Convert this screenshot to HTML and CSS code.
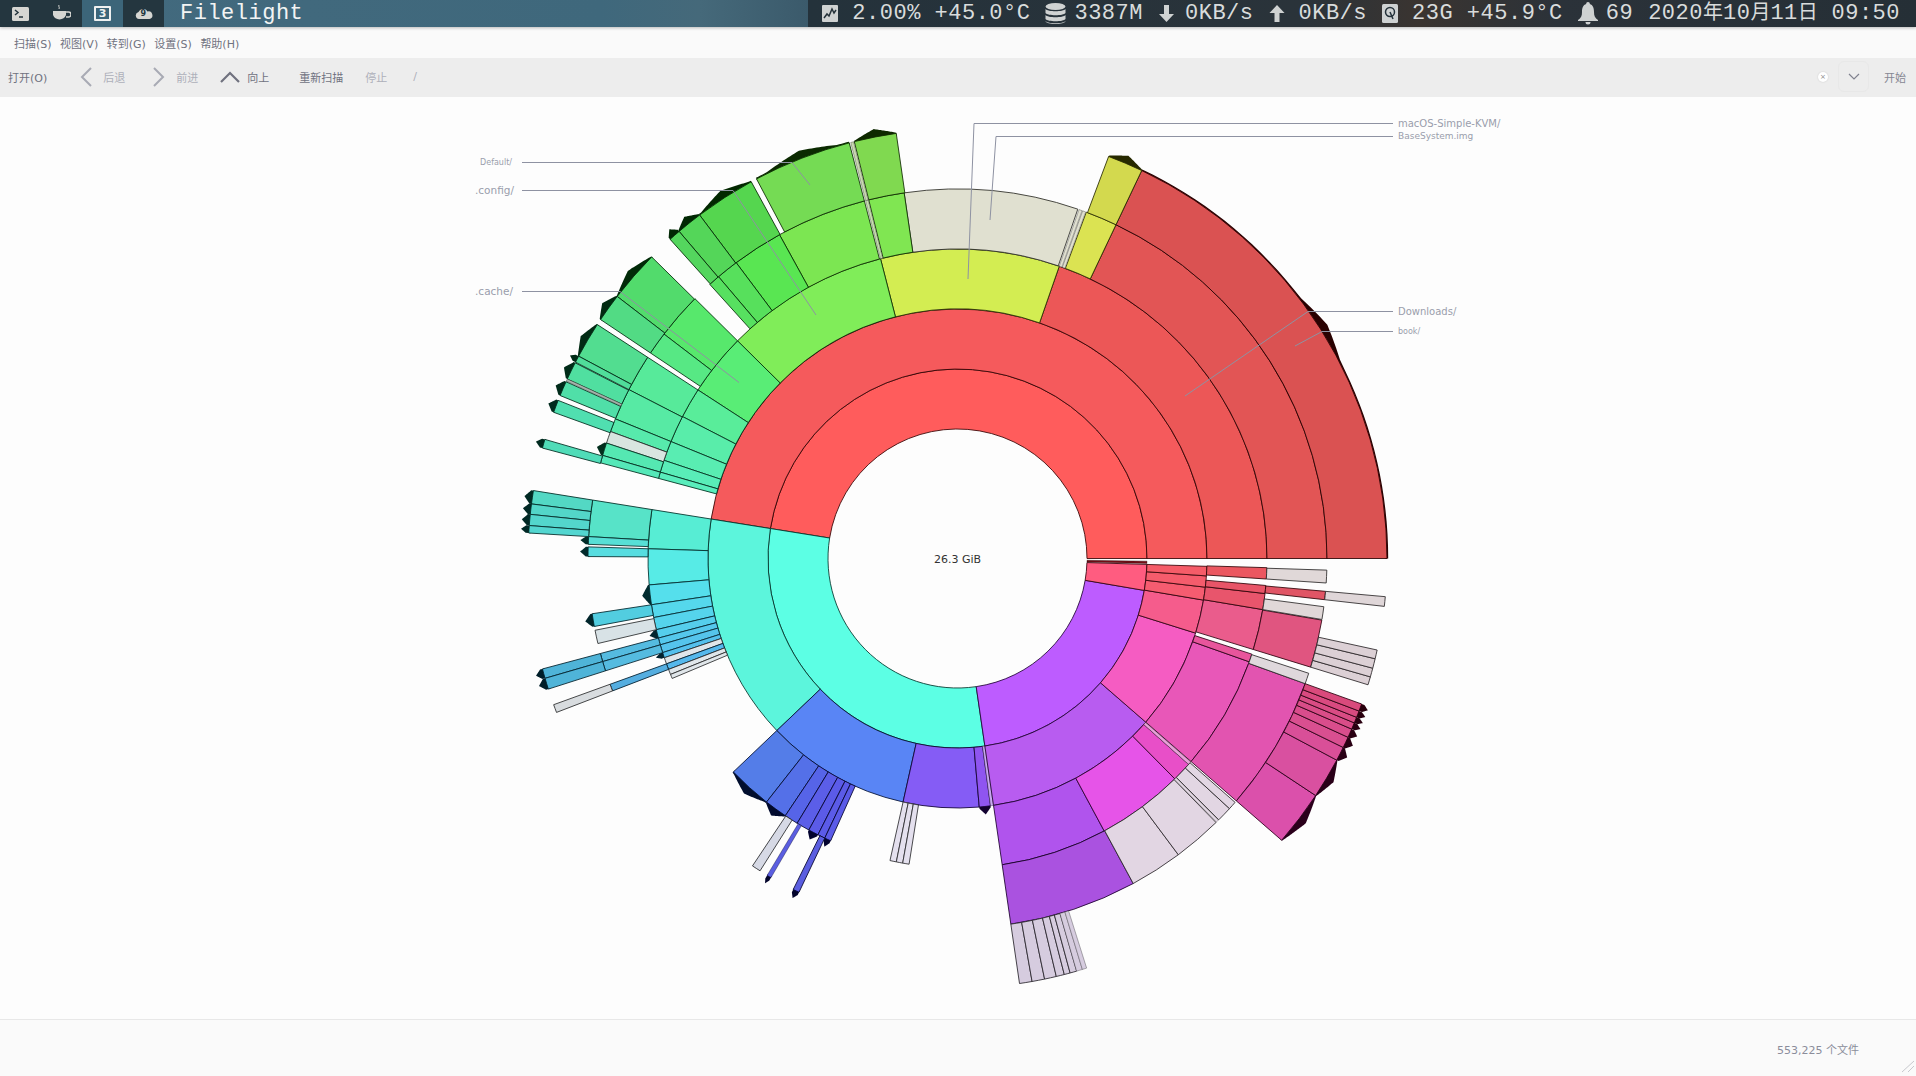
FILE: index.html
```html
<!DOCTYPE html>
<html>

<head>
    <meta name="viewport" content="width=device-width, minimum-scale=1">

    <title>Filelight</title>
    <link rel="stylesheet" href="styles.css">
</head>

<body>
    <!-- desktop panel -->
    <header class="panel">
        <div class="tile">
            <svg width="17" height="14" viewBox="0 0 17 14">
                <rect width="17" height="14" rx="1.5" fill="#d6d6d2"/>
                <path d="M3 3l3 2.5-3 2.5M7 10h4" fill="none" stroke="#24343c" stroke-width="1.5"/>
            </svg>
        </div>
        <div class="tile">
            <svg width="19" height="19" viewBox="0 0 19 19">
                <path d="M1 7h13v4a7 7 0 0 1-13 0z" fill="#d6d6d2"/>
                <path d="M14 8h2.500a2 2 0 0 1 0 5H14" fill="none" stroke="#d6d6d2" stroke-width="1.6"/>
                <path d="M7 1c-1 1.500 1 2 0 4" fill="none" stroke="#d6d6d2"/>
            </svg>
        </div>
        <div class="tile tile-active"><span class="workspace">3</span></div>
        <div class="tile">
            <div class="cloud">
                <svg width="18" height="10" viewBox="0 0 18 10">
                    <path d="M4 10a3.500 3.500 0 0 1-.500-6.900A5 5 0 0 1 12.500 2.500 3.800 3.800 0 0 1 14.500 10z" fill="#d6d6d2"/>
                </svg>
                <span class="cloud-num">9</span>
            </div>
        </div>
        <div class="panel-title">Filelight</div>

        <div class="status">
            <div class="status-item">
                <svg width="16" height="17" viewBox="0 0 16 17">
                    <rect width="16" height="17" rx="1" fill="#cfd2d2"/>
                    <path d="M2 13l3-4 2 2 3-7 2 4 2-3" fill="none" stroke="#25323a" stroke-width="1.500"/>
                </svg>
                <span>2.00% +45.0°C</span>
            </div>
            <div class="status-item status-tight">
                <svg width="21" height="22" viewBox="0 0 21 22" fill="#cfd2d2">
                    <ellipse cx="10.500" cy="3.500" rx="10" ry="3.500"/>
                    <path d="M.5 6c2 3 18 3 20 0v4c-2 3-18 3-20 0zM.5 12c2 3 18 3 20 0v4c-2 3-18 3-20 0zM.5 18c2 3 18 3 20 0 0 4-20 4-20 0z"/>
                </svg>
                <span>3387M</span>
            </div>
            <div class="status-item status-mid">
                <svg width="17" height="17" viewBox="0 0 17 17"><path d="M6 0h5v9h5l-7.500 8L1 9h5z" fill="#cfd2d2"/></svg>
                <span>0KB/s</span>
            </div>
            <div class="status-item">
                <svg width="16" height="17" viewBox="0 0 16 17"><path d="M5.500 17h5V8h5L8 0 .5 8h5z" fill="#cfd2d2"/></svg>
                <span>0KB/s</span>
            </div>
            <div class="status-item">
                <svg width="16" height="19" viewBox="0 0 16 19">
                    <rect width="16" height="19" rx="1.500" fill="#cfd2d2"/>
                    <circle cx="8" cy="8" r="4.500" fill="none" stroke="#25323a" stroke-width="1.500"/>
                    <path d="M8 8l3 7" stroke="#25323a" stroke-width="1.500"/>
                </svg>
                <span>23G +45.9°C</span>
            </div>
            <div class="status-item status-tight">
                <svg width="20" height="23" viewBox="0 0 20 23">
                    <path d="M10 0a1.800 1.800 0 0 1 1.800 2C15 3 16 6 16 10c0 4 1 6 4 8v1H0v-1c3-2 4-4 4-8 0-4 1-7 4.200-8A1.800 1.800 0 0 1 10 0zM7.500 20h5a2.500 2.500 0 0 1-5 0z" fill="#cfd2d2"/>
                </svg>
                <span>69</span>
            </div>
            <div class="status-item"><span>2020<span class="cjk">年</span>10<span class="cjk">月</span>11<span class="cjk">日</span> 09:50</span></div>
        </div>
    </header>

    <nav class="menubar">
        <span>扫描(S)</span>
        <span>视图(V)</span>
        <span>转到(G)</span>
        <span>设置(S)</span>
        <span>帮助(H)</span>
    </nav>

    <div class="toolbar">
        <span class="tool">打开(O)</span>
        <span class="tool tool-off tool-gap">
            <svg width="12" height="20" viewBox="0 0 12 20"><path d="M11 1L2 10l9 9" fill="none" stroke="#a8aab4" stroke-width="2"/></svg>
            后退
        </span>
        <span class="tool tool-off tool-next">
            <svg width="12" height="20" viewBox="0 0 12 20"><path d="M1 1l9 9-9 9" fill="none" stroke="#a8aab4" stroke-width="2"/></svg>
            前进
        </span>
        <span class="tool tool-up">
            <svg width="20" height="12" viewBox="0 0 20 12"><path d="M1 11l9-9 9 9" fill="none" stroke="#70727f" stroke-width="2.200"/></svg>
            向上
        </span>
        <span class="tool tool-rescan">重新扫描</span>
        <span class="tool tool-off">停止</span>
        <span class="tool tool-off tool-path">/</span>

        <div class="toolbar-end">
            <span class="clear-dot">×</span>
            <span class="combo-btn">
                <svg width="12" height="7" viewBox="0 0 12 7"><path d="M1 1l5 5 5-5" fill="none" stroke="#80828f" stroke-width="1.200"/></svg>
            </span>
            <span class="tool tool-start">开始</span>
        </div>
    </div>

    <main class="chart-area">
        <svg id="chart" class="chart" viewBox="0 97 1916 922"></svg>
    </main>

    <footer class="statusbar">
        <span>553,225 个文件</span>
        <svg class="grip" width="14" height="14" viewBox="0 0 14 14">
            <path d="M1 13L13 2M7 13l6-6" fill="none" stroke="#c8c9ce"/>
        </svg>
    </footer>

    <script src="chart.js"></script>
</body>

</html>
```
FILE: styles.css
```css
* {
    box-sizing: border-box;
    padding: 0;
    margin: 0;
}

:root {
    --text: #70727f;
    --text-off: #aeb0ba;
}

body {
    display: flex;
    flex-direction: column;
    height: 100vh;
    overflow: hidden;
    background: #fdfdfd;
    color: var(--text);
    font: 11px "DejaVu Sans", "Noto Sans CJK SC", sans-serif;
}

/* panel */
.panel {
    display: flex;
    align-items: stretch;
    height: 27px;
    flex: none;
    color: #d9dcdc;
    font: 22px/26px "Liberation Mono", "Noto Sans CJK SC", monospace;
    letter-spacing: 0.5px;
    background: linear-gradient(90deg, #436a7e 0, #3f687c 600px, #45697a 700px, #3b5a6b 808px, #24323b 808px, #2a333a 1300px, #3a3430 1420px, #2b3239 1560px, #252f36 100%);
    box-shadow: 0 1px 3px rgba(0, 0, 0, 0.25);
    position: relative;
}

.tile {
    display: flex;
    align-items: center;
    justify-content: center;
    width: 41px;
    background: #24363f;
}

.tile-active {
    background: #3c6579;
}

.workspace {
    display: block;
    width: 17px;
    height: 15px;
    border: 2px solid #eef0f0;
    border-radius: 1px;
    color: #eef0f0;
    font: bold 11px/11px "DejaVu Sans", sans-serif;
    text-align: center;
    letter-spacing: 0;
}

.cloud {
    position: relative;
    display: flex;
}

.cloud-num {
    position: absolute;
    left: 6px;
    top: 0;
    color: #24363f;
    font: bold 8px/10px "DejaVu Sans", sans-serif;
    letter-spacing: 0;
}

.panel-title {
    margin-left: 16px;
    padding-top: 1px;
    color: #f2f4f4;
}

.status {
    display: flex;
    align-items: center;
    gap: 15px;
    margin-left: auto;
    padding-right: 16px;
}

.status-item {
    display: flex;
    align-items: center;
    gap: 14px;
}

.status-tight {
    gap: 8px;
}

.status-mid {
    gap: 10px;
}

.cjk {
    font-size: 20px;
    letter-spacing: 0;
}

/* menu and toolbar */
.menubar {
    display: flex;
    align-items: center;
    gap: 8.500px;
    flex: none;
    height: 31px;
    padding-left: 14px;
    background: #fafafa;
}

.toolbar {
    display: flex;
    align-items: center;
    gap: 22px;
    flex: none;
    height: 39px;
    padding: 0 0 2px 8px;
    background: #ededed;
}

.tool {
    display: flex;
    align-items: center;
    gap: 11px;
    white-space: nowrap;
}

.tool-off {
    color: var(--text-off);
}

.tool-gap {
    margin-left: 11px;
}

.tool-next {
    margin-left: 6px;
}

.tool-up {
    gap: 7px;
}

.tool-rescan {
    margin-left: 8px;
}

.tool-path {
    margin-left: 4px;
}

.toolbar-end {
    display: flex;
    align-items: center;
    margin-left: auto;
    padding-right: 10px;
}

.clear-dot {
    width: 10px;
    height: 10px;
    border-radius: 50%;
    background: #fff;
    box-shadow: 0 0 2px rgba(0, 0, 0, 0.15);
    color: #888;
    font-size: 7px;
    line-height: 10px;
    text-align: center;
}

.combo-btn {
    display: flex;
    align-items: center;
    justify-content: center;
    width: 31px;
    height: 31px;
    margin: 0 15px 0 10px;
    border: 1px solid #e8e8e8;
    border-radius: 6px;
}

.tool-start {
    color: #858793;
}

/* chart */
.chart-area {
    flex: 1;
    min-height: 0;
    background: #fdfdfd;
}

.chart {
    display: block;
    width: 100%;
    height: 100%;
}

.seg {
    stroke-width: 1;
    stroke-opacity: 0.85;
    stroke-linejoin: round;
}

.seg-thin {
    stroke-width: 0.6;
    stroke-opacity: 0.6;
}

.leader {
    fill: none;
    stroke: #8e92a2;
    stroke-width: 1;
}

.chart-label {
    fill: #9a9dac;
    font-family: "DejaVu Sans", sans-serif;
}

.chart-total {
    fill: #333;
    font-family: "DejaVu Sans", sans-serif;
    font-size: 11px;
    text-anchor: middle;
}

/* bottom bar */
.statusbar {
    position: relative;
    display: flex;
    align-items: center;
    justify-content: flex-end;
    flex: none;
    height: 57px;
    padding: 2px 57px 0 0;
    border-top: 1px solid #e8e8e8;
    background: #fafafa;
    color: #8b8d9b;
}

.grip {
    position: absolute;
    right: 1px;
    bottom: 3px;
}
```
FILE: chart.js
```js
const CX = 957.5;
const CY = 558.5;
const RADII = [129.5, 189.5, 249.5, 309.5, 369.5, 429.5];

const GREY = "#e2d6e3";

// ring, start angle, end angle, colour, has-more arrow
const segments = [
    // ring 0
    [0, 0, 170.9, "#ff5c5c"],
    [0, 170.9, 278.3, "#5cffe4"],
    [0, 278.3, 350.3, "#bd5cff"],
    [0, 350.3, 358.2, "#ff5c80"],
    [0, 358.5, 359.2, "#7a1018"],

    // ring 1
    [1, 0, 170.9, "#f55a5c"],
    [1, 170.9, 223.6, "#5cf5dc"],
    [1, 223.6, 257.4, "#5985f5"],
    [1, 257.4, 275, "#855cf5"],
    [1, 275, 277.6, "#8f55f0", 1],
    [1, 277.6, 278.3, "#c8a8f0"],
    [1, 278.3, 319, "#b85cf0"],
    [1, 319, 342.6, "#f55cc2"],
    [1, 342.6, 350.4, "#f55c8c"],
    [1, 350.4, 353.4, "#f55c70"],
    [1, 353.4, 356, "#f55c6c"],
    [1, 356, 358.2, "#f55c68"],

    // ring 2 - top half
    [2, 0, 70.8, "#ec5757"],
    [2, 70.8, 104.4, "#d3ed52"],
    [2, 104.4, 135.3, "#80ed59"],
    [2, 135.3, 147, "#59ed76"],
    [2, 147, 152.7, "#59ed9a"],
    [2, 152.7, 157.8, "#59edaa"],
    [2, 157.8, 161.5, "#59edb2"],
    [2, 161.5, 163.8, "#59edb8"],
    [2, 163.8, 165, "#59edbc"],

    // ring 2 - cyan
    [2, 170.9, 178.2, "#57edd4"],
    [2, 178.2, 184.9, "#57ebe6"],
    [2, 184.9, 188.6, "#55dfec", 1],
    [2, 188.6, 191, "#55d8ec"],
    [2, 191, 193.3, "#55d4ec"],
    [2, 193.3, 194.9, "#55ceec", 1],
    [2, 194.9, 196.2, "#55c8ec"],
    [2, 196.2, 197.7, "#55c4ec"],
    [2, 197.7, 198.7, "#55c0ec", 1],
    [2, 198.7, 199.9, "#e0e6ea"],
    [2, 199.9, 201, "#55b8ec"],
    [2, 201, 202, "#e0e6ea"],
    [2, 202, 202.8, "#e0e6ea"],

    // ring 2 - blue
    [2, 223.6, 231.9, "#547de8", 1],
    [2, 231.9, 236.2, "#5470e8", 1],
    [2, 236.2, 238.8, "#5664e8"],
    [2, 238.8, 241.3, "#5b5ee8"],
    [2, 241.3, 243.2, "#5b5be8", 1],
    [2, 243.2, 244.6, "#5b5be8"],
    [2, 244.6, 245.8, "#5b5be8", 1],
    [2, 257.4, 258.6, "#e4e0ee"],
    [2, 258.6, 259.8, "#e4e0ee"],
    [2, 259.8, 261, "#e4e0ee"],

    // ring 2 - purple
    [2, 278.3, 298.3, "#b054ed"],
    [2, 298.3, 314.6, "#e654e8"],
    [2, 314.6, 318.3, "#e84fc8"],
    [2, 318.3, 318.9, "#e8a0d8"],
    [2, 319, 340.5, "#e857b8"],
    [2, 340.5, 342, "#e8559c"],
    [2, 342.9, 350.5, "#ea5c8c"],
    [2, 350.5, 353.5, "#e8556c"],
    [2, 353.5, 355, "#e85568"],
    [2, 356.2, 358.3, "#eb5760"],

    // ring 3 - top half
    [3, 0, 64.6, "#e25555"],
    [3, 64.6, 69.6, "#dbe352"],
    [3, 69.7, 70.2, "#e0e0d0"],
    [3, 70.3, 70.8, "#e0e0d0"],
    [3, 71, 98.3, "#e0e0d0"],
    [3, 98.3, 103.9, "#80e652"],
    [3, 104, 104.4, "#c8e0b0"],
    [3, 104.6, 118.8, "#7ce652"],
    [3, 118.8, 126.8, "#59e652"],
    [3, 126.8, 130.3, "#57e05c"],
    [3, 130.3, 132.1, "#57e060"],
    [3, 135.3, 142.6, "#57e86c"],
    [3, 142.6, 146.2, "#57e884"],
    [3, 147, 152.8, "#57ea9a"],
    [3, 152.8, 157.8, "#57eaa4"],
    [3, 157.8, 159.9, "#57eaac"],
    [3, 159.9, 161.8, "#d8e5e0"],
    [3, 161.8, 163.8, "#55e8b2", 1],
    [3, 163.8, 165, "#55e8b8"],

    // ring 3 - cyan and blue
    [3, 170.9, 176.6, "#57e3c8"],
    [3, 176.6, 177.8, "#57dfd6", 1],
    [3, 178.2, 179.7, "#57dde0", 1],
    [3, 188.6, 190.6, "#52cde0", 1],
    [3, 191.2, 193.3, "#d8e2e6"],
    [3, 194.9, 196.2, "#55bbe0"],
    [3, 196.2, 197.7, "#55bbe0"],
    [3, 199.9, 201, "#55aee0"],
    [3, 236.3, 237.7, "#d6d9e5"],
    [3, 239, 239.7, "#5b5ee0", 1],
    [3, 243.6, 244.6, "#5b5ee0", 1],

    // ring 3 - purple and pink
    [3, 278.3, 298.4, "#aa52e0"],
    [3, 298.4, 306.7, GREY],
    [3, 306.7, 314.4, GREY],
    [3, 314.5, 314.9, GREY],
    [3, 315, 317.4, GREY],
    [3, 317.4, 318.7, GREY],
    [3, 319, 340.2, "#e254b0"],
    [3, 340.2, 341.9, "#dfd8dc"],
    [3, 342.9, 350.4, "#e05580"],
    [3, 350.5, 352.5, "#e0d8d8"],
    [3, 353.6, 354.9, "#e05565"],
    [3, 356.2, 358.2, "#e0d8d8"],

    // ring 4 - top half
    [4, 0, 64.6, "#da5252", 1],
    [4, 64.6, 69.4, "#d3d94e", 1],
    [4, 98.2, 103.9, "#80d950", 1],
    [4, 104, 104.4, "#c8d8b0"],
    [4, 104.6, 117.9, "#75db54", 1],
    [4, 118.7, 126.9, "#55d64f", 1],
    [4, 126.9, 130.4, "#54d659", 1],
    [4, 130.4, 132, "#54d65e", 1],
    [4, 135.4, 142.4, "#52db6c", 1],
    [4, 142.4, 146.2, "#52db84", 1],
    [4, 147, 151.9, "#52dd90", 1],
    [4, 151.9, 152.8, "#50dd9a", 1],
    [4, 152.9, 155.3, "#50dfa0", 1],
    [4, 155.3, 155.6, "#aab8b0"],
    [4, 155.7, 157.7, "#50dfa8", 1],
    [4, 158.4, 160.1, "#50dfb0", 1],
    [4, 163.9, 165.1, "#50dcb8", 1],

    // ring 4 - cyan
    [4, 170.9, 172.7, "#53d8c4", 1],
    [4, 172.7, 174.1, "#53d6c8", 1],
    [4, 174.1, 175.6, "#53d6cc", 1],
    [4, 175.6, 176.6, "#53d6d0", 1],
    [4, 194.9, 196.2, "#4fb4d8", 1],
    [4, 196.2, 197.7, "#4fb4d8", 1],
    [4, 199.9, 201, "#d8dcdf"],

    // ring 4 - purple greys and pinks
    [4, 278.3, 280, "#d6ccdf"],
    [4, 280, 281.7, "#d6ccdf"],
    [4, 281.7, 283.3, "#d6ccdf"],
    [4, 283.3, 284.4, "#d6ccdf"],
    [4, 284.4, 285.2, "#d6ccdf"],
    [4, 285.2, 286.1, "#d6ccdf"],
    [4, 286.1, 286.9, "#d6ccdf"],
    [4, 286.9, 287.5, "#d6ccdf"],
    [4, 319, 326.5, "#db50ab", 1],
    [4, 326.5, 332, "#d950a0", 1],
    [4, 332, 333.9, "#d94f98", 1],
    [4, 333.9, 335.4, "#d94f90", 1],
    [4, 335.4, 336.6, "#d94d8c", 1],
    [4, 336.6, 337.5, "#d94d88", 1],
    [4, 337.5, 338.3, "#d94c84", 1],
    [4, 338.3, 339.2, "#d94a80", 1],
    [4, 339.2, 340.2, "#d94a7c", 1],
    [4, 342.9, 344, "#dcd0d5"],
    [4, 344, 345.2, "#dcd0d5"],
    [4, 345.2, 346.5, "#dcd0d5"],
    [4, 346.5, 347.7, "#dcd0d5"],
    [4, 353.6, 354.9, "#dfd6d8"],
];

const labels = [
    { text: "Default/", size: 8, x: 512, y: 162.5, anchor: "end", pts: "522,162.5 792,162.5 810,185" },
    { text: ".config/", size: 10.5, x: 514, y: 190.5, anchor: "end", pts: "522,190.5 733,190.5 816,315" },
    { text: ".cache/", size: 10.5, x: 513, y: 291.5, anchor: "end", pts: "522,291.5 620,291.5 739,382.5" },
    { text: "macOS-Simple-KVM/", size: 10, x: 1398, y: 123.5, anchor: "start", pts: "1393,123.5 974,123.5 968,279" },
    { text: "BaseSystem.img", size: 9, x: 1398, y: 136, anchor: "start", pts: "1393,136.5 996,136.5 990,220" },
    { text: "Downloads/", size: 10, x: 1398, y: 311.5, anchor: "start", pts: "1393,311.5 1308,311.5 1185,396" },
    { text: "book/", size: 8, x: 1398, y: 331.5, anchor: "start", pts: "1393,331.5 1322,331.5 1295,346" },
];

const SVG_NS = "http://www.w3.org/2000/svg";
const chart = document.getElementById("chart");

function polar(r, deg) {
    const a = deg * Math.PI / 180;
    return (CX + r * Math.cos(a)).toFixed(2) + " " + (CY - r * Math.sin(a)).toFixed(2);
}

function add(tag, attrs) {
    const el = document.createElementNS(SVG_NS, tag);
    for (const key in attrs) {
        el.setAttribute(key, attrs[key]);
    }
    chart.appendChild(el);
    return el;
}

// darkened shade used for outlines and arrows
function dark(hex) {
    const out = [1, 3, 5].map((i) => {
        const c = parseInt(hex.substr(i, 2), 16);
        return Math.round(Math.max(0, c - 80) * 0.3);
    });
    return `rgb(${out.join(",")})`;
}

function arcPath(r0, r1, a0, a1) {
    const large = a1 - a0 > 180 ? 1 : 0;
    return `M${polar(r0, a0)} L${polar(r1, a0)} A${r1} ${r1} 0 ${large} 0 ${polar(r1, a1)}` +
        ` L${polar(r0, a1)} A${r0} ${r0} 0 ${large} 1 ${polar(r0, a0)} Z`;
}

// wedge on the outer edge, means the folder goes deeper than we draw
function arrowPath(r, a0, a1) {
    const mid = (a0 + a1) / 2;
    const len = a1 - a0;
    const w = Math.min(6, len / 2 + 0.3);
    const base = len > 8 ? 1.2 : 0;
    const points = [];
    const steps = 40;
    for (let i = 0; i <= steps; i++) {
        const a = a0 + (len * i) / steps;
        const h = Math.max(base, 8 * (1 - Math.abs(a - mid) / w));
        points.push(polar(r + h, a));
    }
    points.push(polar(r - 2, a1), polar(r - 2, a0));
    return "M" + points.join(" L") + " Z";
}

segments.filter((s) => s[4]).forEach((s) => {
    add("path", { d: arrowPath(RADII[s[0] + 1], s[1], s[2]), fill: dark(s[3]) });
});

segments.forEach((s) => {
    add("path", {
        class: s[2] - s[1] < 0.8 ? "seg seg-thin" : "seg",
        d: arcPath(RADII[s[0]], RADII[s[0] + 1], s[1], s[2]),
        fill: s[3],
        stroke: dark(s[3]),
    });
});

labels.forEach((l) => {
    add("polyline", { class: "leader", points: l.pts });
    const t = add("text", {
        class: "chart-label",
        x: l.x,
        y: l.y + l.size * 0.36,
        "font-size": l.size,
        "text-anchor": l.anchor,
    });
    t.textContent = l.text;
});

const total = add("text", { class: "chart-total", x: CX, y: 563 });
total.textContent = "26.3 GiB";
```
